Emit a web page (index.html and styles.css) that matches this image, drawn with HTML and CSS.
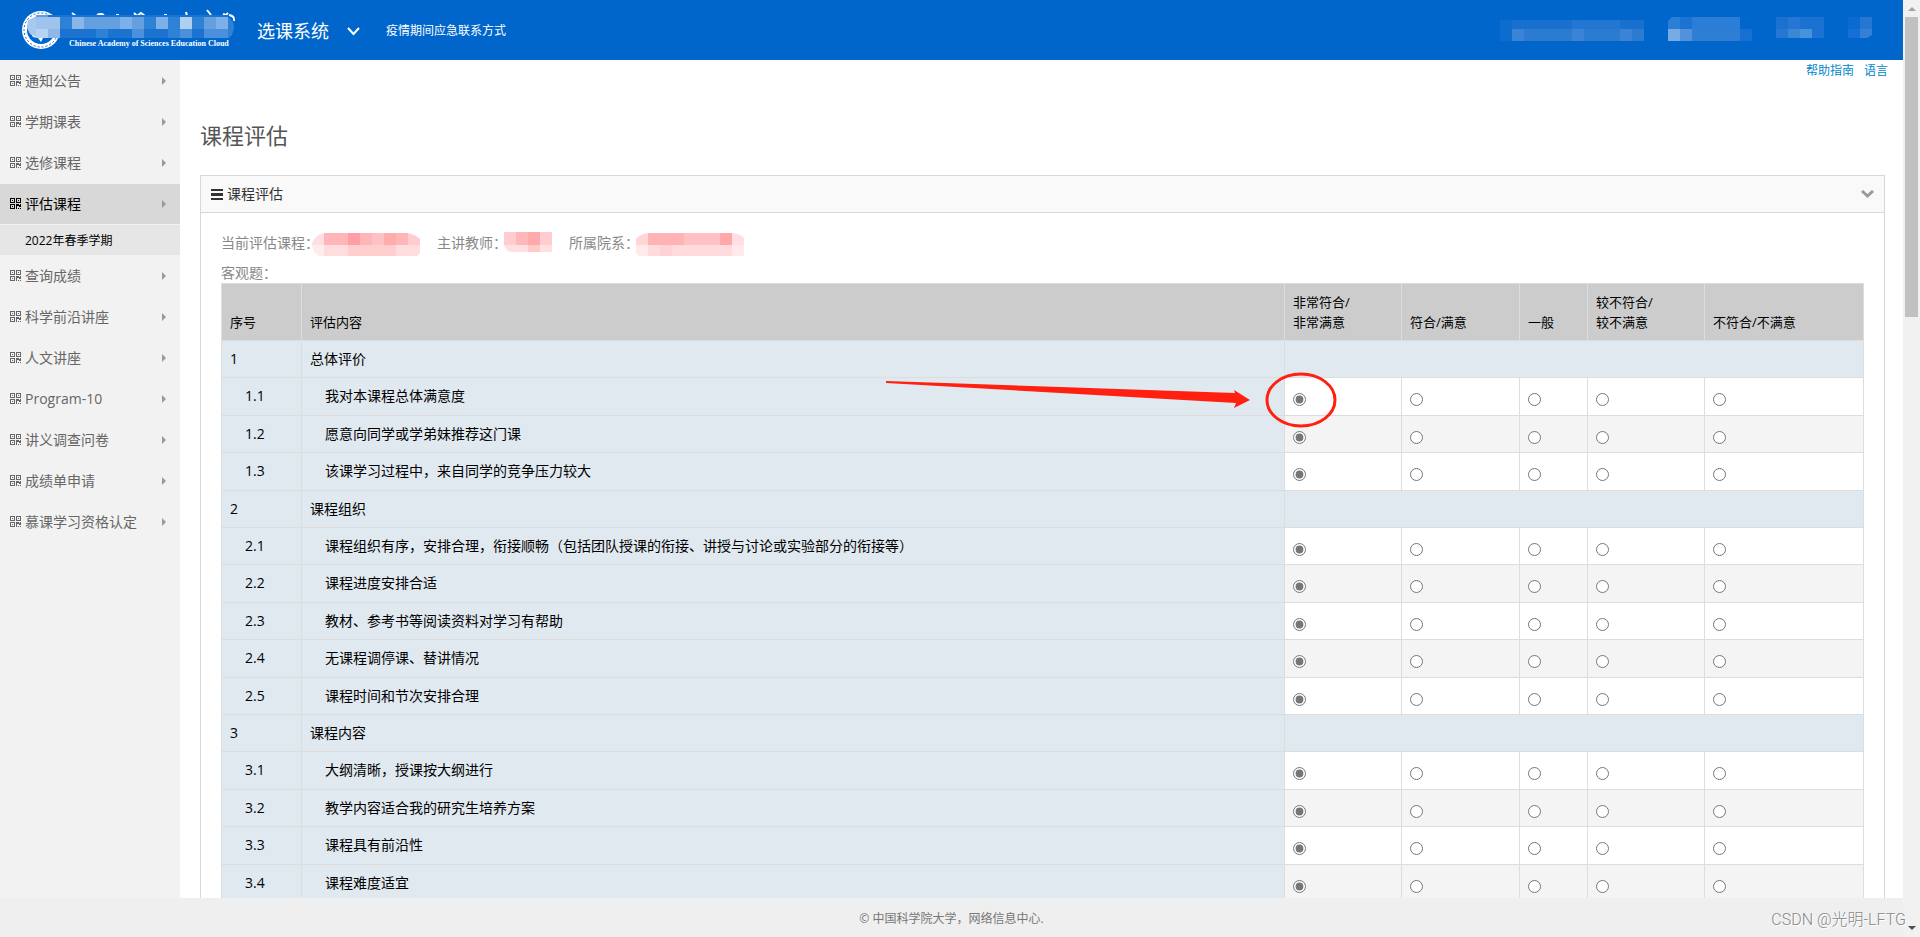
FILE: index.html
```html
<!DOCTYPE html>
<html lang="zh-CN">
<head>
<meta charset="utf-8">
<title>课程评估</title>
<link rel="stylesheet" href="styles.css">
</head>
<body>
<svg class="defs" aria-hidden="true">
  <symbol id="qr" viewBox="0 0 12 12">
    <path fill="currentColor" fill-rule="evenodd" d="M0 0h5v5H0zM1 1v3h3V1zM2 2h1v1H2zM6 0h5v5H6zM7 1v3h3V1zM8 2h1v1H8zM0 6h5v5H0zM1 7v3h3V7zM2 8h1v1H2zM6 6h3v1h1V6h1v3H9V8H7v3H6zM8 10h1v1H8zM10 10h1v1h-1z"/>
  </symbol>
  <symbol id="caret" viewBox="0 0 5 8"><path fill="#999" d="M0 0l4 4-4 4z"/></symbol>
</svg>
<div class="page">
  <div class="shell">
    <header class="topbar">
      <svg class="logo" width="240" height="60" viewBox="0 0 240 60" role="img" aria-label="Chinese Academy of Sciences Education Cloud">
        <circle cx="31" cy="30" r="19" fill="#fff"/>
        <circle cx="31" cy="30" r="17" fill="none" stroke="#0066cc" stroke-width="1" stroke-dasharray="2 2"/>
        <circle cx="31" cy="30" r="14" fill="#0066cc"/>
        <path fill="#fff" d="M20 32q11 8 22 0l-5 5-4 1-2 4-3-4-5-1z"/>
        <g stroke="#fff" stroke-width="2" fill="none">
          <path d="M62 13l4 3M87 15q4-2 7 0M106 15h3M124 13l3 3 4-3 4 3M154 15h3M176 12l1 4M197 10l4 5M213 14l3 1 2-2M219 15q6 1 5 6"/>
        </g>
        <path fill="#5a9de0" d="M26 15h12v2H26z"/>
        <path fill="#1c72cf" d="M38 15h180v2H38z"/>
        <path fill="#a8c9ee" d="M18 20l8-3v20l-6-3-3-6z"/>
        <path fill="#9fc3ec" d="M26 17h24v12H26z"/>
        <path fill="#b6d3f1" d="M26 29h12v9H26z"/>
        <path fill="#8fb8e8" d="M38 29h12v9H38z"/>
        <path fill="#2e82d6" d="M50 17h168q6 4 6 10-1 10-6 11H62V29H50z"/>
        <path fill="#8ab6e8" d="M62 17h12v12H62z"/>
        <path fill="#64a0e0" d="M74 17h60v12H74zM194 17h12v12h-12z"/>
        <path fill="#7db0e8" d="M110 17h12v12h-12zM146 17h12v12h-12zM206 17h12v12h-12z"/>
        <path fill="#b0d0f0" d="M170 17h12v12h-12z"/>
        <path fill="#1c72cf" d="M50 29h36v9H50zM98 29h24v9H98zM134 29h24v9h-24zM182 29h12v9h-12z"/>
        <path fill="#4a90dc" d="M122 29h12v9h-12zM170 29h12v9h-12zM194 29h24v9h-24z"/>
        <text class="logo-sub" x="59" y="46">Chinese Academy of Sciences Education Cloud</text>
      </svg>
      <button class="system" type="button">选课系统
        <svg width="13" height="9" viewBox="0 0 13 9" aria-hidden="true"><path d="M1 1l5.500 6L12 1" fill="none" stroke="#fff" stroke-width="2"/></svg>
      </button>
      <a class="contact" href="#">疫情期间应急联系方式</a>
      <svg class="account" width="372" height="24" viewBox="0 0 372 24" aria-hidden="true">
        <path fill="#1a70cf" d="M0 3h144v9H0z"/><path fill="#2377d2" d="M72 3h48v9H72z"/>
        <path fill="#2b7bd1" d="M0 12h144v12H0z"/><path fill="#0f6ccf" d="M0 3h12v21H0z"/>
        <path fill="#4388d6" d="M72 12h12v12H72zM12 12h12v12H12zM120 12h12v12h-12z" fill-opacity=".7"/>
        <path fill="#2a7ed6" d="M168 4l4-4h68v12h-72z"/><path fill="#1d73d2" d="M180 0h12v12h-12z"/>
        <path fill="#2f7ed6" d="M168 12h72v12h-72z"/><path fill="#76abe6" d="M168 12h12v12h-12z"/><path fill="#5292dc" d="M180 12h12v12h-12z"/><path fill="#176fd2" d="M240 12h12v12h-12z"/>
        <path fill="#1b71d0" d="M276 0h48v12h-48z"/><path fill="#2677d4" d="M288 0h12v12h-12zM276 12h12v9h-12z"/><path fill="#3b87d6" d="M288 12h12v9h-12z"/><path fill="#4792da" d="M300 12h12v9h-12z"/><path fill="#1b71d4" d="M312 12h12v9h-12z"/>
        <path fill="#0a6ad0" d="M348 0h12v12h-12z"/><path fill="#1470d4" d="M348 12h12v9h-12z"/><path fill="#2478d4" d="M360 0h12v12h-12z"/><path fill="#3580d6" d="M360 12h12v6l-5 3h-7z"/>
      </svg>
    </header>
    <div class="columns">
      <nav class="sidebar">
        <a href="#"><svg class="qr"><use href="#qr"/></svg>通知公告<svg class="caret"><use href="#caret"/></svg></a>
        <a href="#"><svg class="qr"><use href="#qr"/></svg>学期课表<svg class="caret"><use href="#caret"/></svg></a>
        <a href="#"><svg class="qr"><use href="#qr"/></svg>选修课程<svg class="caret"><use href="#caret"/></svg></a>
        <a class="active" href="#"><svg class="qr"><use href="#qr"/></svg>评估课程<svg class="caret"><use href="#caret"/></svg></a>
        <a class="sub" href="#">2022年春季学期</a>
        <a href="#"><svg class="qr"><use href="#qr"/></svg>查询成绩<svg class="caret"><use href="#caret"/></svg></a>
        <a href="#"><svg class="qr"><use href="#qr"/></svg>科学前沿讲座<svg class="caret"><use href="#caret"/></svg></a>
        <a href="#"><svg class="qr"><use href="#qr"/></svg>人文讲座<svg class="caret"><use href="#caret"/></svg></a>
        <a href="#"><svg class="qr"><use href="#qr"/></svg>Program-10<svg class="caret"><use href="#caret"/></svg></a>
        <a href="#"><svg class="qr"><use href="#qr"/></svg>讲义调查问卷<svg class="caret"><use href="#caret"/></svg></a>
        <a href="#"><svg class="qr"><use href="#qr"/></svg>成绩单申请<svg class="caret"><use href="#caret"/></svg></a>
        <a href="#"><svg class="qr"><use href="#qr"/></svg>慕课学习资格认定<svg class="caret"><use href="#caret"/></svg></a>
      </nav>
      <main class="content">
        <div class="links"><a href="#">帮助指南</a><a href="#">语言</a></div>
        <h1>课程评估</h1>
        <section class="panel">
          <div class="panel-head">
            <svg width="12" height="11" viewBox="0 0 12 11" aria-hidden="true"><path fill="#333" d="M0 0h12v2H0zM0 4h12v3H0zM0 9h12v2H0z"/></svg>
            <h2>课程评估</h2>
            <button class="fold" type="button" aria-label="折叠"><svg width="13" height="9" viewBox="0 0 13 9"><path d="M1 1l5.500 5L12 1" fill="none" stroke="#999" stroke-width="3"/></svg></button>
          </div>
          <div class="panel-body">
            <div class="info">
              <span>当前评估课程：</span>
              <svg class="blur" width="108" height="24" viewBox="0 0 108 24" aria-hidden="true">
                <path fill="#ffe0e0" d="M0 10Q4 1 12 0v12H0z"/><path fill="#ffb6b9" d="M12 0h84v12H12z"/><path fill="#ff9fa3" d="M36 0h12v12H36z"/><path fill="#ffc2c4" d="M60 0h12v12H60z"/><path fill="#ffacac" d="M72 0h12v12H72z"/><path fill="#ffcccf" d="M96 0q8 2 12 6v6H96z"/>
                <path fill="#ffecec" d="M0 12h12v11H7Q1 20 0 12z"/><path fill="#ffdcde" d="M12 12h96v8l-3 3H12z"/><path fill="#ffcfd0" d="M36 12h48v11H36z"/>
              </svg>
              <span>主讲教师：</span>
              <svg class="blur teacher" width="48" height="24" viewBox="0 0 48 24" aria-hidden="true">
                <path fill="#ffcdd0" d="M0 0h48v13H0z"/><path fill="#ffb8ba" d="M12 0h12v13H12z"/><path fill="#ffa9ab" d="M24 0h12v13H24z"/><path fill="#ffdfe0" d="M0 13h48v7H7q-6-2-7-7z"/><path fill="#ffcaca" d="M24 13h12v7H24z"/>
              </svg>
              <span>所属院系：</span>
              <svg class="blur dept" width="108" height="24" viewBox="0 0 108 24" aria-hidden="true">
                <path fill="#ffd6d6" d="M0 6q4-5 12-6v12H0z"/><path fill="#ffb3b5" d="M12 0h36v12H12z"/><path fill="#ffc1c4" d="M48 0h36v12H48z"/><path fill="#ffa9ab" d="M84 0h12v12H84z"/><path fill="#ffdfe1" d="M96 0q9 1 12 5v7H96z"/>
                <path fill="#ffe9ea" d="M0 12h108v11H3l-3-3z"/><path fill="#ffdbdd" d="M12 12h84v11H12z"/><path fill="#ffd2d5" d="M24 12h12v11H24z"/>
              </svg>
            </div>
            <div class="kind">客观题：</div>
            <table>
              <colgroup><col class="c-no"><col><col class="c-a"><col class="c-b"><col class="c-c"><col class="c-a"><col class="c-e"></colgroup>
              <thead>
                <tr><th>序号</th><th>评估内容</th><th>非常符合/<br>非常满意</th><th>符合/满意</th><th>一般</th><th>较不符合/<br>较不满意</th><th>不符合/不满意</th></tr>
              </thead>
              <tbody>
                <tr class="group"><td>1</td><td>总体评价</td><td colspan="5"></td></tr>
                <tr><td>1.1</td><td>我对本课程总体满意度</td><td class="marked"><input type="radio" name="q11" aria-label="非常满意" checked>
                  <svg class="note" width="454" height="60" viewBox="0 0 454 60" aria-hidden="true"><path fill="#ff2010" d="M1 10L350 22l-1-3 16 10-16 8 2-5L1 12z"/><ellipse cx="416" cy="29" rx="34" ry="26" fill="none" stroke="#ff2010" stroke-width="3"/></svg>
                </td><td><input type="radio" name="q11" aria-label="满意"></td><td><input type="radio" name="q11" aria-label="一般"></td><td><input type="radio" name="q11" aria-label="较不满意"></td><td><input type="radio" name="q11" aria-label="不满意"></td></tr>
                <tr><td>1.2</td><td>愿意向同学或学弟妹推荐这门课</td><td><input type="radio" name="q12" aria-label="非常满意" checked></td><td><input type="radio" name="q12" aria-label="满意"></td><td><input type="radio" name="q12" aria-label="一般"></td><td><input type="radio" name="q12" aria-label="较不满意"></td><td><input type="radio" name="q12" aria-label="不满意"></td></tr>
                <tr><td>1.3</td><td>该课学习过程中，来自同学的竞争压力较大</td><td><input type="radio" name="q13" aria-label="非常满意" checked></td><td><input type="radio" name="q13" aria-label="满意"></td><td><input type="radio" name="q13" aria-label="一般"></td><td><input type="radio" name="q13" aria-label="较不满意"></td><td><input type="radio" name="q13" aria-label="不满意"></td></tr>
                <tr class="group"><td>2</td><td>课程组织</td><td colspan="5"></td></tr>
                <tr><td>2.1</td><td>课程组织有序，安排合理，衔接顺畅（包括团队授课的衔接、讲授与讨论或实验部分的衔接等）</td><td><input type="radio" name="q21" aria-label="非常满意" checked></td><td><input type="radio" name="q21" aria-label="满意"></td><td><input type="radio" name="q21" aria-label="一般"></td><td><input type="radio" name="q21" aria-label="较不满意"></td><td><input type="radio" name="q21" aria-label="不满意"></td></tr>
                <tr><td>2.2</td><td>课程进度安排合适</td><td><input type="radio" name="q22" aria-label="非常满意" checked></td><td><input type="radio" name="q22" aria-label="满意"></td><td><input type="radio" name="q22" aria-label="一般"></td><td><input type="radio" name="q22" aria-label="较不满意"></td><td><input type="radio" name="q22" aria-label="不满意"></td></tr>
                <tr><td>2.3</td><td>教材、参考书等阅读资料对学习有帮助</td><td><input type="radio" name="q23" aria-label="非常满意" checked></td><td><input type="radio" name="q23" aria-label="满意"></td><td><input type="radio" name="q23" aria-label="一般"></td><td><input type="radio" name="q23" aria-label="较不满意"></td><td><input type="radio" name="q23" aria-label="不满意"></td></tr>
                <tr><td>2.4</td><td>无课程调停课、替讲情况</td><td><input type="radio" name="q24" aria-label="非常满意" checked></td><td><input type="radio" name="q24" aria-label="满意"></td><td><input type="radio" name="q24" aria-label="一般"></td><td><input type="radio" name="q24" aria-label="较不满意"></td><td><input type="radio" name="q24" aria-label="不满意"></td></tr>
                <tr><td>2.5</td><td>课程时间和节次安排合理</td><td><input type="radio" name="q25" aria-label="非常满意" checked></td><td><input type="radio" name="q25" aria-label="满意"></td><td><input type="radio" name="q25" aria-label="一般"></td><td><input type="radio" name="q25" aria-label="较不满意"></td><td><input type="radio" name="q25" aria-label="不满意"></td></tr>
                <tr class="group"><td>3</td><td>课程内容</td><td colspan="5"></td></tr>
                <tr><td>3.1</td><td>大纲清晰，授课按大纲进行</td><td><input type="radio" name="q31" aria-label="非常满意" checked></td><td><input type="radio" name="q31" aria-label="满意"></td><td><input type="radio" name="q31" aria-label="一般"></td><td><input type="radio" name="q31" aria-label="较不满意"></td><td><input type="radio" name="q31" aria-label="不满意"></td></tr>
                <tr><td>3.2</td><td>教学内容适合我的研究生培养方案</td><td><input type="radio" name="q32" aria-label="非常满意" checked></td><td><input type="radio" name="q32" aria-label="满意"></td><td><input type="radio" name="q32" aria-label="一般"></td><td><input type="radio" name="q32" aria-label="较不满意"></td><td><input type="radio" name="q32" aria-label="不满意"></td></tr>
                <tr><td>3.3</td><td>课程具有前沿性</td><td><input type="radio" name="q33" aria-label="非常满意" checked></td><td><input type="radio" name="q33" aria-label="满意"></td><td><input type="radio" name="q33" aria-label="一般"></td><td><input type="radio" name="q33" aria-label="较不满意"></td><td><input type="radio" name="q33" aria-label="不满意"></td></tr>
                <tr><td>3.4</td><td>课程难度适宜</td><td><input type="radio" name="q34" aria-label="非常满意" checked></td><td><input type="radio" name="q34" aria-label="满意"></td><td><input type="radio" name="q34" aria-label="一般"></td><td><input type="radio" name="q34" aria-label="较不满意"></td><td><input type="radio" name="q34" aria-label="不满意"></td></tr>
              </tbody>
            </table>
          </div>
        </section>
      </main>
    </div>
    <footer class="footer">© 中国科学院大学，网络信息中心.</footer>
  </div>
  <div class="scrollbar" aria-hidden="true">
    <svg width="17" height="17" viewBox="0 0 17 17"><path fill="#a3a3a3" d="M5 11l4-4 4 4z"/></svg>
    <div class="thumb"></div>
    <svg width="17" height="17" viewBox="0 0 17 17"><path fill="#505050" d="M5 6l4 4 4-4z"/></svg>
  </div>
  <div class="watermark">CSDN @光明-LFTG</div>
</div>
</body>
</html>
```
FILE: styles.css
```css
* { box-sizing: border-box; }
body {
  margin: 0;
  font: 14px/20px "Open Sans", "Noto Sans CJK SC", sans-serif;
  color: #666;
  background: #fff;
}
a { text-decoration: none; }
button { padding: 0; border: 0; background: none; color: inherit; font: inherit; cursor: pointer; }
.defs { position: absolute; width: 0; height: 0; }

.page { position: relative; display: flex; height: 100vh; overflow: hidden; }
.shell { flex: 1; min-width: 0; display: flex; flex-direction: column; }

.topbar {
  flex: none;
  display: flex;
  align-items: center;
  height: 60px;
  padding: 0 31px 0 10px;
  background: #0066cc;
  color: #fff;
}
.logo-sub { font: bold 8px "Liberation Serif", serif; fill: #fff; }
.system { display: flex; align-items: center; gap: 18px; margin: 2px 0 0 7px; font-size: 18px; line-height: 24px; }
.contact { margin: 2px 0 0 26px; font-size: 12px; color: #fff; }
.account { margin-left: auto; margin-bottom: 2px; }

.columns { flex: 1; min-height: 0; display: flex; overflow: hidden; }
.sidebar { flex: none; width: 180px; background: #f2f2f2; }
.sidebar a {
  display: flex;
  align-items: center;
  height: 40px;
  margin-top: 1px;
  padding: 0 13px 0 10px;
  color: #666;
}
.sidebar a.active { background: #d8d8d8; color: #000; }
.sidebar a.sub { height: 30px; padding: 2px 13px 0 25px; background: #e6e6e6; color: #000; font-size: 12px; }
.qr { width: 12px; height: 12px; margin-right: 3px; }
.caret { width: 5px; height: 8px; margin-left: auto; }

.content { flex: 1; min-width: 0; padding: 0 18px 0 20px; }
.links { display: flex; justify-content: flex-end; gap: 10px; margin-right: -3px; font-size: 12px; line-height: 22px; }
.links a { color: #0088cc; }
h1 { margin: 35px 0 22px; font-size: 22px; line-height: 36px; font-weight: 400; color: #555; }

.panel { border: 1px solid #d8d8d8; background: #fff; }
.panel-head {
  display: flex;
  align-items: center;
  gap: 4px;
  height: 37px;
  padding: 0 10px;
  border-bottom: 1px solid #d8d8d8;
  background: #f9f9f9;
  color: #333;
}
h2 { margin: 0; font-size: 14px; line-height: 20px; font-weight: 400; }
.fold { display: flex; margin-left: auto; }
.panel-body { padding: 14px 20px 20px; color: #888; }
.info { display: flex; align-items: center; height: 32px; margin-bottom: 4px; }
.blur { margin: 4px 17px 0 -7px; }
.blur.teacher { margin: 2px 17px 0 -3px; }
.blur.dept { margin-left: -3px; }
.kind { height: 20px; }

table { width: 100%; table-layout: fixed; border-collapse: collapse; color: #000; }
.c-no { width: 80px; }
.c-a { width: 117px; }
.c-b { width: 118px; }
.c-c { width: 68px; }
.c-e { width: 159px; }
th, td { padding: 8px; border: 1px solid #ddd; text-align: left; }
th { background: #ccc; font-size: 13px; font-weight: 400; vertical-align: bottom; }
td { height: 37px; vertical-align: top; background: #fff; }
tr:nth-child(5n+2) td, tr:nth-child(5n+4) td { height: 38px; }
tr:nth-child(odd) td { background: #f4f4f4; }
tbody tr td:nth-child(-n+2), tbody .group td { background: #e1e9f0; }
tbody tr:not(.group) td:nth-child(-n+2) { padding-left: 23px; }
tbody tr:not(.group) td:nth-child(n+3) { padding-bottom: 0; }
input[type="radio"] { display: block; width: 13px; height: 13px; margin: 7px 0 0; accent-color: #767676; }
.marked { position: relative; }
.note { position: absolute; left: -400px; top: -7px; pointer-events: none; z-index: 1; }

.footer { flex: none; height: 39px; background: #efefef; text-align: center; font-size: 12px; line-height: 42px; color: #777; }

.scrollbar { flex: none; display: flex; flex-direction: column; width: 17px; background: #f1f1f1; }
.scrollbar svg { flex: none; }
.scrollbar .thumb { width: 13px; height: 32%; margin: 0 2px auto; background: #c1c1c1; }
.watermark {
  position: absolute;
  right: 14px;
  bottom: 5px;
  font: 16px/24px Roboto, "Noto Sans CJK SC", sans-serif;
  font-weight: 300;
  color: #888;
  text-shadow: 1px 1px 0 #fff;
}
```
